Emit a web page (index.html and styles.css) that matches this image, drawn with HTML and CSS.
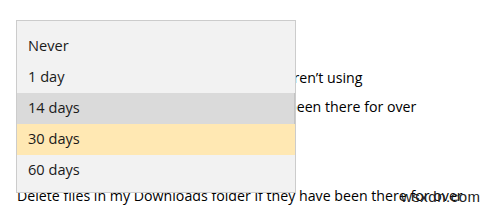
FILE: index.html
```html
<!DOCTYPE html>
<html>
<head>
<meta charset="utf-8">
<link rel="stylesheet" href="styles.css">
</head>
<body>
<div class="page">
  <div class="settings">
    <label class="check-row">
      <span class="checkbox"></span>
      <span class="line">Delete temporary files that my apps aren’t using</span>
    </label>
    <p class="line">Delete files in my recycle bin if they have been there for over</p>
    <div class="dropdown-space"></div>
    <p class="line">Delete files in my Downloads folder if they have been there for over</p>
  </div>
  <ul class="menu">
    <li class="item">Never</li>
    <li class="item">1 day</li>
    <li class="item item-hover">14 days</li>
    <li class="item item-selected">30 days</li>
    <li class="item">60 days</li>
  </ul>
  <span class="watermark">wsxdn.com</span>
</div>
</body>
</html>
```
FILE: styles.css
```css
html, body {
  margin: 0;
  padding: 0;
  background: #ffffff;
}
.page {
  position: relative;
  width: 491px;
  height: 205px;
  overflow: hidden;
  font-family: "Open Sans", "Noto Sans", sans-serif;
}
.settings {
  display: flex;
  flex-direction: column;
  padding: 68px 0 0 17px;
}
.check-row {
  display: flex;
  align-items: center;
  gap: 8px;
  margin-bottom: 9px;
}
.checkbox {
  width: 18px;
  height: 18px;
  border: 1px solid #000000;
  background: #0078d7;
  flex: none;
}
.line {
  margin: 0;
  font-size: 14.2px;
  line-height: 20px;
  color: #000000;
  white-space: nowrap;
}
.dropdown-space {
  height: 69px;
}
.menu {
  position: absolute;
  left: 16px;
  top: 20px;
  width: 280px;
  height: 173px;
  box-sizing: border-box;
  margin: 0;
  padding: 10px 0 0 0;
  list-style: none;
  background: #f2f2f2;
  border: 1px solid #cccccc;
  display: flex;
  flex-direction: column;
}
.item {
  height: 31px;
  display: flex;
  align-items: center;
  padding-left: 11px;
  padding-bottom: 3px;
  box-sizing: border-box;
  font-size: 14.6px;
  color: #1a1a1a;
}
.item-hover {
  background: #dadada;
  border-right: 1px solid #c4c4c4;
}
.item-selected {
  background: #ffe8b3;
}
.watermark {
  position: absolute;
  left: 401px;
  top: 187px;
  font-size: 15px;
  line-height: 20px;
  color: #222222;
  font-family: "Liberation Sans", sans-serif;
  letter-spacing: 0.5px;
}
```
